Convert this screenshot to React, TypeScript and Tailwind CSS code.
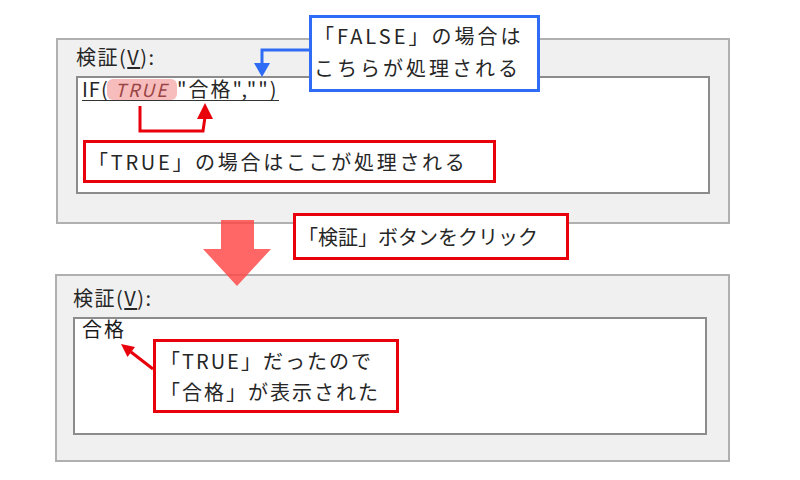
import React from "react";

const jp = "font-['Noto_Sans_CJK_JP',sans-serif]";

const Label = ({ className }: { className: string }) => (
  <div className={`h-[26px] leading-[26px] text-[20px] tracking-[1.5px] ${className}`}>
    検証(<span className="underline underline-offset-2">V</span>):
  </div>
);

const App = () => {
  return (
    <div className={`relative w-[800px] h-[480px] overflow-hidden bg-white pt-[38px] text-[#262626] ${jp}`}>
      {/* top panel: the formula */}
      <div className="ml-[56px] w-[674px] h-[186px] border-2 border-[#b0b0b0] bg-[#f0f0f0] px-[18px] pt-[4px]">
        <Label className="mb-[6px]" />
        <div className="h-[118px] border-2 border-[#8c8c8c] bg-white">
          <div className="h-[23px] pl-[4px]">
            <span className="inline-flex h-[23px] items-center border-b border-[#333] text-[20px] leading-[22px]">
              <span className="w-[25px] tracking-[1px]">IF(</span>
              <span className="w-[70px] h-[21px] rounded-[6px] bg-[#f7bcbc] text-center text-[18px] italic tracking-[2px] leading-[21px] text-[#9a4545]">
                TRUE
              </span>
              <span className="tracking-[2px]">"合格","")</span>
            </span>
          </div>
          <svg width="200" height="39" className="block">
            <polyline
              points="62,5 62,30 125,30 127,16"
              fill="none"
              stroke="#e8000b"
              strokeWidth="3"
            />
            <polygon points="127,2 119,18 135,18" fill="#e8000b" />
          </svg>
          <div className="ml-[5px] w-[413px] h-[43px] border-[3px] border-[#e8000b] pl-[2px] text-[20px] leading-[37px] tracking-[2.7px] whitespace-nowrap">
            「TRUE」の場合はここが処理される
          </div>
        </div>
      </div>

      {/* bottom panel: the result */}
      <div className="mt-[50px] ml-[55px] w-[675px] h-[188px] border-2 border-[#b0b0b0] bg-[#f0f0f0] pl-[16px] pr-[21px] pt-[9px]">
        <Label className="mb-[6px]" />
        <div className="h-[118px] border-2 border-[#8c8c8c] bg-white">
          <div className="h-[20px] pl-[7px] text-[20px] leading-[20px] tracking-[2px] text-[#1a1a1a]">合格</div>
          <div className="ml-[78px] w-[246px] h-[74px] border-[3px] border-[#e8000b] pl-[4px] pt-[3px] text-[20px] leading-[31px] tracking-[2px] whitespace-nowrap">
            <div>「TRUE」だったので</div>
            <div>「合格」が表示された</div>
          </div>
        </div>
      </div>

      {/* callouts lying over the panels */}
      <div className="absolute left-[309px] top-[15px] w-[231px] h-[77px] border-[3px] border-[#2e6cf6] bg-white pl-[2px] pt-[2px] text-[20px] leading-[32px] tracking-[3px] whitespace-nowrap">
        <div>「FALSE」の場合は</div>
        <div>こちらが処理される</div>
      </div>
      <div className="absolute left-[293px] top-[213px] w-[276px] h-[47px] border-[3px] border-[#e8000b] bg-white pl-[2px] text-[20px] leading-[41px] whitespace-nowrap">
        「検証」ボタンをクリック
      </div>

      {/* arrows */}
      <svg width="800" height="480" className="absolute left-0 top-0 pointer-events-none">
        <polyline points="309,50 262,50 262,65" fill="none" stroke="#2e6cf6" strokeWidth="3" />
        <polygon points="254,63 270,63 262,77" fill="#2e6cf6" />
        <polygon
          points="221,220 254,220 254,249 271,249 237,286 203,249 221,249"
          fill="#ff4444"
          fillOpacity="0.82"
        />
        <line x1="153" y1="369" x2="131" y2="352" stroke="#e8000b" strokeWidth="3" />
        <polygon points="121,344 135,347 127.5,357" fill="#e8000b" />
      </svg>
    </div>
  );
};

export default App;
